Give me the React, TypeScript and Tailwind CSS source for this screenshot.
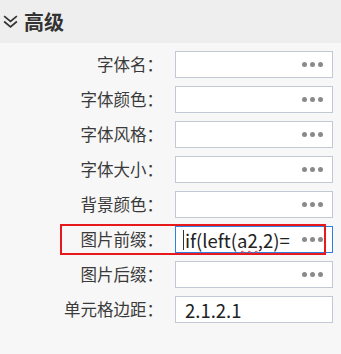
const rows: { label: string; value?: string; dots: boolean; active?: boolean }[] = [
  { label: "字体名", dots: true },
  { label: "字体颜色", dots: true },
  { label: "字体风格", dots: true },
  { label: "字体大小", dots: true },
  { label: "背景颜色", dots: true },
  { label: "图片前缀", value: "if(left(a2,2)=", dots: true, active: true },
  { label: "图片后缀", dots: true },
  { label: "单元格边距", value: "2.1.2.1", dots: false },
];

export default function App() {
  return (
    <div
      className="w-[341px] h-[354px] bg-[#f7f7f7] overflow-hidden"
      style={{ fontFamily: '"Noto Sans CJK SC", "Noto Sans", sans-serif' }}
    >
      <div className="h-[43px] bg-[#eeeeee] flex items-center pl-[2px]">
        <svg width="17" height="17" viewBox="0 0 16 16" fill="none" stroke="#333" strokeWidth="1.6">
          <polyline points="2,3 8,8 14,3" />
          <polyline points="2,8 8,13 14,8" />
        </svg>
        <span className="ml-[5px] text-[20px] font-bold text-[#333] leading-none">高级</span>
      </div>

      <div className="pt-[8px] flex flex-col gap-[8px]">
        {rows.map((r) => (
          <div key={r.label} className="relative flex items-center h-[27px]">
            <div className="w-[165px] text-right text-[16.5px] text-[#3a3a3a] pr-[2px] whitespace-nowrap">{r.label}：</div>
            <div
              className={`ml-[10px] w-[158px] h-[27px] bg-white flex items-center pl-[9px] pr-[9px] border ${
                r.active ? "border-[#2f7fe0]" : "border-[#c2c8d4]"
              }`}
            >
              {r.active && <span className="w-px h-[20px] bg-[#333] -ml-[2px] mr-[1px]" />}
              <span className="flex-1 text-[18.5px] leading-[22px] text-[#222] whitespace-nowrap">
                {r.value === "if(left(a2,2)=" ? (
                  <>
                    if(left(
                    <span className="underline decoration-wavy decoration-[#e03a3a] decoration-1 underline-offset-2">a2</span>
                    ,2)=
                  </>
                ) : (
                  r.value
                )}
              </span>
              {r.dots && (
                <span className="flex gap-[3px] ml-[2px]">
                  <span className="w-[5px] h-[5px] rounded-full bg-[#8a8a8a]" />
                  <span className="w-[5px] h-[5px] rounded-full bg-[#8a8a8a]" />
                  <span className="w-[5px] h-[5px] rounded-full bg-[#8a8a8a]" />
                </span>
              )}
            </div>
            {r.active && (
              <div className="absolute left-[60px] top-[-2px] w-[266px] h-[31px] border-2 border-[#e8191c] pointer-events-none" />
            )}
          </div>
        ))}
      </div>
    </div>
  );
}
